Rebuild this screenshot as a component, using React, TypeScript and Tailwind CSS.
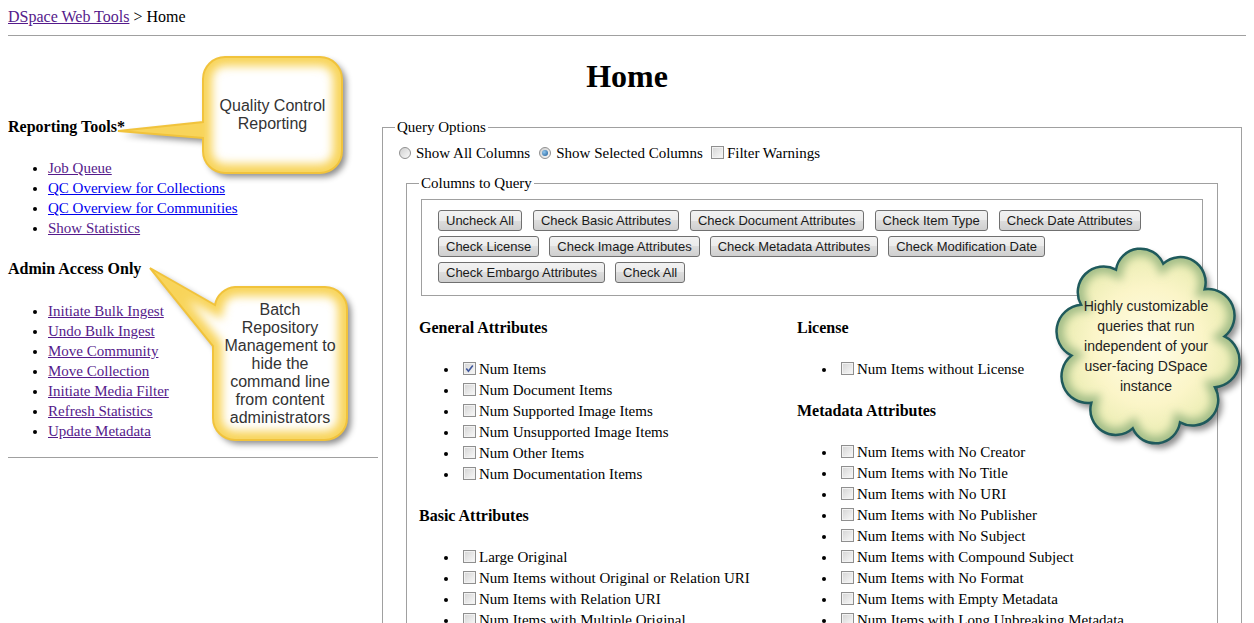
import React from 'react'

// scalloped cloud outline, bumps laid round an ellipse
function cloudPath(cx: number, cy: number, rx: number, ry: number, n: number) {
  const pts: [number, number][] = []
  for (let i = 0; i < n; i++) {
    const a = -Math.PI / 2 + (i * 2 * Math.PI) / n + 0.2
    pts.push([cx + rx * Math.cos(a), cy + ry * Math.sin(a)])
  }
  let d = `M${pts[0][0].toFixed(1)} ${pts[0][1].toFixed(1)}`
  for (let i = 0; i < n; i++) {
    const p = pts[i]
    const q = pts[(i + 1) % n]
    const c = Math.hypot(q[0] - p[0], q[1] - p[1])
    const r = c * 0.52
    d += ` A${r.toFixed(1)} ${r.toFixed(1)} 0 0 1 ${q[0].toFixed(1)} ${q[1].toFixed(1)}`
  }
  return d + 'Z'
}

const CLOUD = cloudPath(108, 116, 77, 84, 10)

// callout 1: rounded box with tail to the left
const CALLOUT_1 =
  'M115 7 H210 A22 22 0 0 1 232 29 V101 A22 22 0 0 1 210 123 H115 A22 22 0 0 1 93 101 V88 L8 81 L93 72 V29 A22 22 0 0 1 115 7 Z'

// callout 2: rounded box with tail up-left
const CALLOUT_2 =
  'M95 27 H185 A22 22 0 0 1 207 49 V158 A22 22 0 0 1 185 180 H95 A22 22 0 0 1 73 158 V86 L10 8 L75 45 A22 22 0 0 1 95 27 Z'

function Bubble({ d, id }: { d: string; id: string }) {
  return (
    <svg className="absolute inset-0 w-full h-full overflow-visible">
      <defs>
        <clipPath id={`${id}-clip`}>
          <path d={d} />
        </clipPath>
        <filter id={`${id}-blur`} x="-20%" y="-20%" width="140%" height="140%">
          <feGaussianBlur stdDeviation="5" />
        </filter>
        <filter id={`${id}-shadow`} x="-20%" y="-20%" width="150%" height="150%">
          <feDropShadow dx="4" dy="4" stdDeviation="3" floodColor="#000" floodOpacity="0.45" />
        </filter>
      </defs>
      <path d={d} fill="#fff" filter={`url(#${id}-shadow)`} />
      <g clipPath={`url(#${id}-clip)`}>
        <path d={d} fill="none" stroke="#f8d45a" strokeWidth="18" filter={`url(#${id}-blur)`} />
      </g>
      <path d={d} fill="none" stroke="#f1c33c" strokeWidth="2" />
    </svg>
  )
}

function Box({ checked, className = '' }: { checked?: boolean; className?: string }) {
  return (
    <span
      className={`relative inline-block w-[13px] h-[13px] align-[-1px] border border-[#8f8f8f] bg-[linear-gradient(135deg,#d4d4d4,#f9f9f9)] shadow-[inset_0_0_0_1px_#f2f2f2] ${className}`}
    >
      {checked && (
        <svg className="absolute inset-0" viewBox="0 0 11 11">
          <path d="M2.3 5.6 L4.4 8.2 L8.8 2.4" fill="none" stroke="#3f579c" strokeWidth="1.6" />
        </svg>
      )}
    </span>
  )
}

function Radio({ on, className = '' }: { on?: boolean; className?: string }) {
  return (
    <span
      className={`relative inline-block w-[12px] h-[12px] align-[-1px] rounded-full border border-[#8f8f8f] bg-[linear-gradient(135deg,#cfcfcf,#fafafa)] ${className}`}
    >
      {on && (
        <span className="absolute left-[2px] top-[2px] w-[6px] h-[6px] rounded-full bg-[radial-gradient(circle_at_35%_35%,#8fc6ef,#1b5a95)]" />
      )}
    </span>
  )
}

function Btn({ children }: { children: React.ReactNode }) {
  return (
    <button className="h-[21px] px-[7px] rounded-[3px] border border-[#707070] bg-[linear-gradient(#f2f2f2,#ebebeb_50%,#dddddd_50%,#cfcfcf)] text-[13px] leading-[19px] text-[#1a1a1a] font-['Liberation_Sans',Arial,sans-serif] whitespace-nowrap">
      {children}
    </button>
  )
}

function CheckList({ items, first }: { items: string[]; first?: string }) {
  return (
    <ul className="mt-[21px] list-disc pl-[40px] leading-[21px] text-[15px]">
      {items.map((it) => (
        <li key={it}>
          <Box checked={it === first} className="ml-[4px] mr-[3px]" />
          {it}
        </li>
      ))}
    </ul>
  )
}

const REPORTING = [
  { label: 'Job Queue', visited: true },
  { label: 'QC Overview for Collections', visited: false },
  { label: 'QC Overview for Communities', visited: false },
  { label: 'Show Statistics', visited: true },
]

const ADMIN = [
  'Initiate Bulk Ingest',
  'Undo Bulk Ingest',
  'Move Community',
  'Move Collection',
  'Initiate Media Filter',
  'Refresh Statistics',
  'Update Metadata',
]

const GENERAL = [
  'Num Items',
  'Num Document Items',
  'Num Supported Image Items',
  'Num Unsupported Image Items',
  'Num Other Items',
  'Num Documentation Items',
]

const BASIC = [
  'Large Original',
  'Num Items without Original or Relation URI',
  'Num Items with Relation URI',
  'Num Items with Multiple Original',
  'Num Items with Original and Relation URI',
]

const METADATA = [
  'Num Items with No Creator',
  'Num Items with No Title',
  'Num Items with No URI',
  'Num Items with No Publisher',
  'Num Items with No Subject',
  'Num Items with Compound Subject',
  'Num Items with No Format',
  'Num Items with Empty Metadata',
  'Num Items with Long Unbreaking Metadata',
  'Num Items with XML Entity in Metadata',
]

export default function App() {
  return (
    <div className="relative min-h-screen bg-white text-black text-[16px] font-['Liberation_Serif','Times_New_Roman',serif]">
      <div className="px-2">
        <div className="pt-[7px] leading-[20px]">
          <a href="#" className="underline text-[#551a8b]">DSpace Web Tools</a> &gt; Home
        </div>
        <div className="mt-[8px] border-t border-[#a0a0a0]" />
        <h1 className="mt-[22px] text-center text-[32px] leading-[37px] font-bold">Home</h1>

        <div className="mt-[22px] flex items-start">
          {/* sidebar */}
          <aside className="w-[370px] shrink-0 leading-[20px]">
            <h3 className="font-bold">Reporting Tools*</h3>
            <ul className="mt-[21px] list-disc pl-[40px] text-[15px]">
              {REPORTING.map((l) => (
                <li key={l.label}>
                  <a href="#" className={l.visited ? 'underline text-[#551a8b]' : 'underline text-[#0000ee]'}>
                    {l.label}
                  </a>
                </li>
              ))}
            </ul>
            <h3 className="mt-[21px] font-bold">Admin Access Only</h3>
            <ul className="mt-[22px] list-disc pl-[40px] text-[15px]">
              {ADMIN.map((l) => (
                <li key={l}>
                  <a href="#" className="underline text-[#551a8b]">{l}</a>
                </li>
              ))}
            </ul>
            <div className="mt-[16px] border-t border-[#a0a0a0]" />
          </aside>

          {/* query form */}
          <fieldset className="mx-[4px] flex-1 min-w-0 border border-[#a0a0a0] px-[12px] pb-[10px] text-[15px]">
            <legend className="px-[2px] leading-[20px]">Query Options</legend>
            <div className="mt-[6px] leading-[20px]">
              <Radio className="ml-[4px] mr-[5px]" />Show All Columns
              <Radio on className="ml-[9px] mr-[5px]" />Show Selected Columns
              <Box className="ml-[8px] mr-[3px]" />Filter Warnings
            </div>

            <fieldset className="mt-[10px] mx-[11px] min-w-0 border border-[#a0a0a0] px-[12px] pb-[10px]">
              <legend className="px-[2px] leading-[20px]">Columns to Query</legend>
              <div className="mt-[6px] mx-[2px] border border-[#a0a0a0] pl-[16px] pt-[10px] pb-[12px] flex flex-col gap-[5px]">
                <div className="flex gap-[11px]">
                  <Btn>Uncheck All</Btn>
                  <Btn>Check Basic Attributes</Btn>
                  <Btn>Check Document Attributes</Btn>
                  <Btn>Check Item Type</Btn>
                  <Btn>Check Date Attributes</Btn>
                </div>
                <div className="flex gap-[10px]">
                  <Btn>Check License</Btn>
                  <Btn>Check Image Attributes</Btn>
                  <Btn>Check Metadata Attributes</Btn>
                  <Btn>Check Modification Date</Btn>
                </div>
                <div className="flex gap-[10px]">
                  <Btn>Check Embargo Attributes</Btn>
                  <Btn>Check All</Btn>
                </div>
              </div>

              <div className="mt-[22px] flex items-start">
                <div className="w-[378px] shrink-0">
                  <h4 className="font-bold text-[16px] leading-[20px]">General Attributes</h4>
                  <CheckList items={GENERAL} first="Num Items" />
                  <h4 className="mt-[21px] font-bold text-[16px] leading-[20px]">Basic Attributes</h4>
                  <CheckList items={BASIC} />
                </div>
                <div className="flex-1">
                  <h4 className="font-bold text-[16px] leading-[20px]">License</h4>
                  <CheckList items={['Num Items without License']} />
                  <h4 className="mt-[21px] font-bold text-[16px] leading-[20px]">Metadata Attributes</h4>
                  <CheckList items={METADATA} />
                </div>
              </div>
            </fieldset>
          </fieldset>
        </div>
      </div>

      {/* callout: quality control */}
      <div className="absolute left-[110px] top-[50px] w-[250px] h-[135px]">
        <Bubble d={CALLOUT_1} id="c1" />
        <div className="absolute left-[93px] top-[7px] w-[139px] h-[116px] flex items-center justify-center text-center text-[16px] leading-[18px] text-[#333] font-['Liberation_Sans',Arial,sans-serif]">
          <p>
            Quality Control
            <br />
            Reporting
          </p>
        </div>
      </div>

      {/* callout: batch management */}
      <div className="absolute left-[140px] top-[260px] w-[220px] h-[195px]">
        <Bubble d={CALLOUT_2} id="c2" />
        <div className="absolute left-[73px] top-[27px] w-[134px] h-[153px] flex items-center justify-center text-center text-[16px] leading-[18px] text-[#333] font-['Liberation_Sans',Arial,sans-serif]">
          <p>
            Batch
            <br />
            Repository
            <br />
            Management to
            <br />
            hide the
            <br />
            command line
            <br />
            from content
            <br />
            administrators
          </p>
        </div>
      </div>

      {/* cloud */}
      <div className="absolute left-[1040px] top-[230px] w-[225px] h-[240px]">
        <svg className="absolute inset-0 w-full h-full overflow-visible">
          <defs>
            <radialGradient id="cloud-fill" cx="50%" cy="50%" r="55%">
              <stop offset="0%" stopColor="#fffde9" />
              <stop offset="55%" stopColor="#fbf5c8" />
              <stop offset="85%" stopColor="#ebedb4" />
              <stop offset="100%" stopColor="#bccd95" />
            </radialGradient>
            <clipPath id="cloud-clip">
              <path d={CLOUD} />
            </clipPath>
            <filter id="cloud-blur" x="-20%" y="-20%" width="140%" height="140%">
              <feGaussianBlur stdDeviation="4" />
            </filter>
            <filter id="cloud-shadow" x="-20%" y="-20%" width="150%" height="150%">
              <feDropShadow dx="4" dy="5" stdDeviation="3" floodColor="#000" floodOpacity="0.45" />
            </filter>
          </defs>
          <path d={CLOUD} fill="url(#cloud-fill)" filter="url(#cloud-shadow)" />
          <g clipPath="url(#cloud-clip)">
            <path d={CLOUD} fill="none" stroke="#a3bd88" strokeWidth="14" filter="url(#cloud-blur)" />
          </g>
          <path d={CLOUD} fill="none" stroke="#1f5a5c" strokeWidth="2.5" />
        </svg>
        <div className="absolute left-0 top-0 w-[212px] h-[232px] flex items-center justify-center text-center text-[14px] leading-[20px] text-[#222] font-['Liberation_Sans',Arial,sans-serif]">
          <p>
            Highly customizable
            <br />
            queries that run
            <br />
            independent of your
            <br />
            user-facing DSpace
            <br />
            instance
          </p>
        </div>
      </div>
    </div>
  )
}
